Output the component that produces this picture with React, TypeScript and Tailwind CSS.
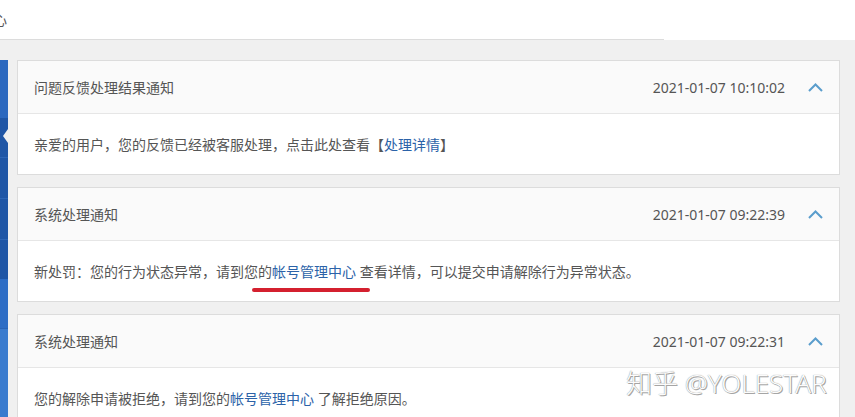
const font = "font-['Noto_Sans','Noto_Sans_CJK_SC',sans-serif]";

const notices = [
  {
    title: "问题反馈处理结果通知",
    time: "2021-01-07 10:10:02",
    body: (
      <span>
        亲爱的用户，您的反馈已经被客服处理，点击此处查看【
        <a className="text-[#2b62a8]">处理详情</a>】
      </span>
    ),
  },
  {
    title: "系统处理通知",
    time: "2021-01-07 09:22:39",
    body: (
      <span>
        新处罚：您的行为状态异常，请到您的
        <span className="relative">
          <a className="text-[#2b62a8]">帐号管理中心</a>
          <span className="absolute left-[-20px] top-[26px] h-[4px] w-[118px] rounded-full bg-[#d4202f]" />
        </span>{" "}
        查看详情，可以提交申请解除行为异常状态。
      </span>
    ),
  },
  {
    title: "系统处理通知",
    time: "2021-01-07 09:22:31",
    body: (
      <span>
        您的解除申请被拒绝，请到您的<a className="text-[#2b62a8]">帐号管理中心</a> 了解拒绝原因。
      </span>
    ),
  },
];

const Chevron = () => (
  <svg width="15" height="10" viewBox="0 0 15 10" fill="none">
    <polyline points="1,9 7.5,2.5 14,9" stroke="#5a9dcc" strokeWidth="2" />
  </svg>
);

const sideBlocks = [
  { h: "h-[58px]", c: "bg-[#2b68bf]" },
  { h: "h-[39px]", c: "bg-[#1f56a6]" },
  { h: "h-[41px]", c: "bg-[#1f56a6] border-t border-[#2d65b5]" },
  { h: "h-[41px]", c: "bg-[#1f56a6] border-t border-[#2d65b5]" },
  { h: "h-[40px]", c: "bg-[#1f56a6] border-t border-[#2d65b5]" },
  { h: "h-[49px]", c: "bg-[#2d6dc5]" },
  { h: "h-[100px]", c: "bg-[#3a7bce] border-t border-[#2a64b6]" },
];

export default function App() {
  return (
    <div className={`relative h-[417px] w-[855px] overflow-hidden bg-[#f0f0f0] text-[14px] text-[#555] ${font}`}>
      <div className="flex h-[40px] bg-white">
        <div className="flex h-[40px] w-[664px] items-center border-b border-[#dcdcdc]">
          <span className="ml-[-7px]">心</span>
        </div>
      </div>

      <div className="flex">
        <div className="relative mt-[20px] flex w-[8px] flex-col">
          {sideBlocks.map((b, i) => (
            <div key={i} className={`${b.h} ${b.c}`} />
          ))}
          <div className="absolute right-0 top-[69px] h-0 w-0 border-y-[7px] border-r-[5px] border-y-transparent border-r-[#f0f0f0]" />
        </div>

        <div className="ml-[9px] mt-[20px] flex w-[823px] flex-col gap-[12px]">
          {notices.map((n, i) => (
            <div key={i} className="border border-[#dcdcdc] bg-white">
              <div className="flex h-[53px] items-center justify-between border-b border-[#e6e6e6] bg-[#fafafa] px-[16px]">
                <span>{n.title}</span>
                <div className="flex items-center gap-[23px]">
                  <span>{n.time}</span>
                  <Chevron />
                </div>
              </div>
              <div className="flex h-[60px] items-center px-[16px]">{n.body}</div>
            </div>
          ))}
        </div>
      </div>

      <div className="absolute left-[626px] top-[364px] text-[26px] font-light text-[#fcfcfc] [text-shadow:0_0_1px_#777,1px_1px_0_#aaa]">
        知乎 @YOLESTAR
      </div>
    </div>
  );
}
